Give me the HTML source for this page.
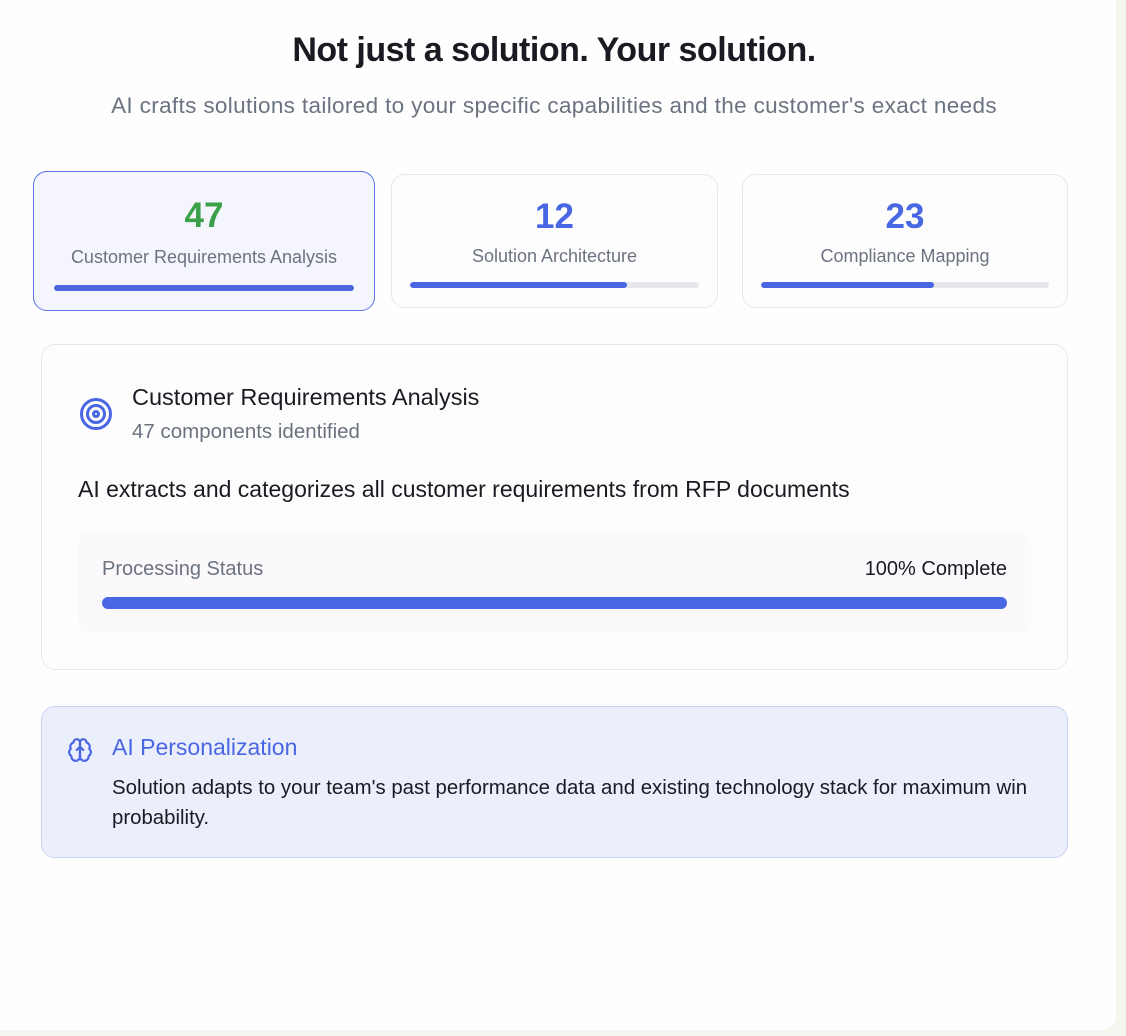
<!DOCTYPE html>
<html><head><meta charset="utf-8"><style>
*{box-sizing:border-box;margin:0;padding:0}
html,body{width:1126px;height:1036px;overflow:hidden}
body{background:#f6f6f0;font-family:"Liberation Sans",sans-serif;position:relative}
.panel{position:absolute;left:0;top:0;width:1116px;height:1030px;background:#fefefe;border-radius:0 0 14px 0}
h1{position:absolute;top:31px;left:0;width:1108px;text-align:center;font-size:34px;font-weight:700;color:#1a1a22;letter-spacing:-0.5px}
.sub{position:absolute;top:93px;left:0;width:1108px;text-align:center;font-size:22.5px;letter-spacing:0.35px;color:#6b7280}
.card{position:absolute;border:1px solid #e5e7eb;border-radius:14px;background:#fdfdfd;text-align:center}
.card .n{font-size:35px;font-weight:700;color:#4a67e3;margin-top:22px;line-height:40px}
.card .l{font-size:18px;color:#6b7280;margin-top:12px}
.card .bar{position:absolute;left:18px;right:18px;bottom:19px;height:6px;border-radius:3px;background:#e5e7eb;overflow:hidden}
.card .bar i{display:block;height:100%;background:#4a67e3;border-radius:3px}
.big{position:absolute;left:41px;top:344px;width:1027px;height:326px;border:1px solid #e5e7eb;border-radius:14px;background:#fdfdfd}
.ai{position:absolute;left:41px;top:706px;width:1027px;height:152px;border:1px solid #c9d2f3;border-radius:14px;background:#ebeefb}
</style></head><body>
<div class="panel">
<h1>Not just a solution. Your solution.</h1>
<div class="sub">AI crafts solutions tailored to your specific capabilities and the customer's exact needs</div>

<div class="card" style="left:33px;top:171px;width:342px;height:140px;border-color:#5b73e8;background:#f5f6fd">
<div class="n" style="color:#3aa04a;margin-top:24px">47</div>
<div class="l" style="margin-top:11px">Customer Requirements Analysis</div>
<div class="bar" style="left:20px;right:20px;bottom:19px"><i style="width:100%"></i></div>
</div>
<div class="card" style="left:391px;top:174px;width:327px;height:134px">
<div class="n">12</div>
<div class="l" style="margin-top:9px">Solution Architecture</div>
<div class="bar"><i style="width:75%"></i></div>
</div>
<div class="card" style="left:742px;top:174px;width:326px;height:134px">
<div class="n">23</div>
<div class="l" style="margin-top:9px">Compliance Mapping</div>
<div class="bar"><i style="width:60%"></i></div>
</div>

<div class="big">
<svg style="position:absolute;left:37px;top:52px" width="34" height="34" viewBox="0 0 34 34" fill="none" stroke="#4a67e3" stroke-width="3"><circle cx="17" cy="17" r="14.5"/><circle cx="17" cy="17" r="8.5"/><circle cx="17" cy="17" r="2.5"/></svg>
<div style="position:absolute;left:90px;top:39px;font-size:23.5px;color:#1a1a22">Customer Requirements Analysis</div>
<div style="position:absolute;left:90px;top:75px;font-size:20.5px;color:#6b7280">47 components identified</div>
<div style="position:absolute;left:36px;top:131px;font-size:23px;color:#1a1a22">AI extracts and categorizes all customer requirements from RFP documents</div>
<div style="position:absolute;left:36px;top:186px;width:953px;height:102px;background:#fbf9fb;border-radius:14px">
<div style="position:absolute;left:24px;top:27px;font-size:20px;color:#6b7280">Processing Status</div>
<div style="position:absolute;right:24px;top:27px;font-size:20px;color:#1a1a22">100% Complete</div>
<div style="position:absolute;left:24px;right:24px;top:66px;height:12px;border-radius:6px;background:#4a67e3"></div>
</div>
</div>

<div class="ai">
<svg style="position:absolute;left:25px;top:30px" width="26" height="26" viewBox="0 0 24 24" fill="none" stroke="#4a67e3" stroke-width="2" stroke-linecap="round" stroke-linejoin="round"><path d="M12 5a3 3 0 1 0-5.997.125 4 4 0 0 0-2.526 5.77 4 4 0 0 0 .556 6.588A4 4 0 1 0 12 18Z"/><path d="M12 5a3 3 0 1 1 5.997.125 4 4 0 0 1 2.526 5.77 4 4 0 0 1-.556 6.588A4 4 0 1 1 12 18Z"/><path d="M12 18V9M9 12l3-3 3 3"/></svg>
<div style="position:absolute;left:70px;top:27px;font-size:23px;color:#4a67e3">AI Personalization</div>
<div style="position:absolute;left:70px;top:66px;width:950px;font-size:20.4px;line-height:30px;color:#1a1a22">Solution adapts to your team's past performance data and existing technology stack for maximum win probability.</div>
</div>
</div>
</body></html>
